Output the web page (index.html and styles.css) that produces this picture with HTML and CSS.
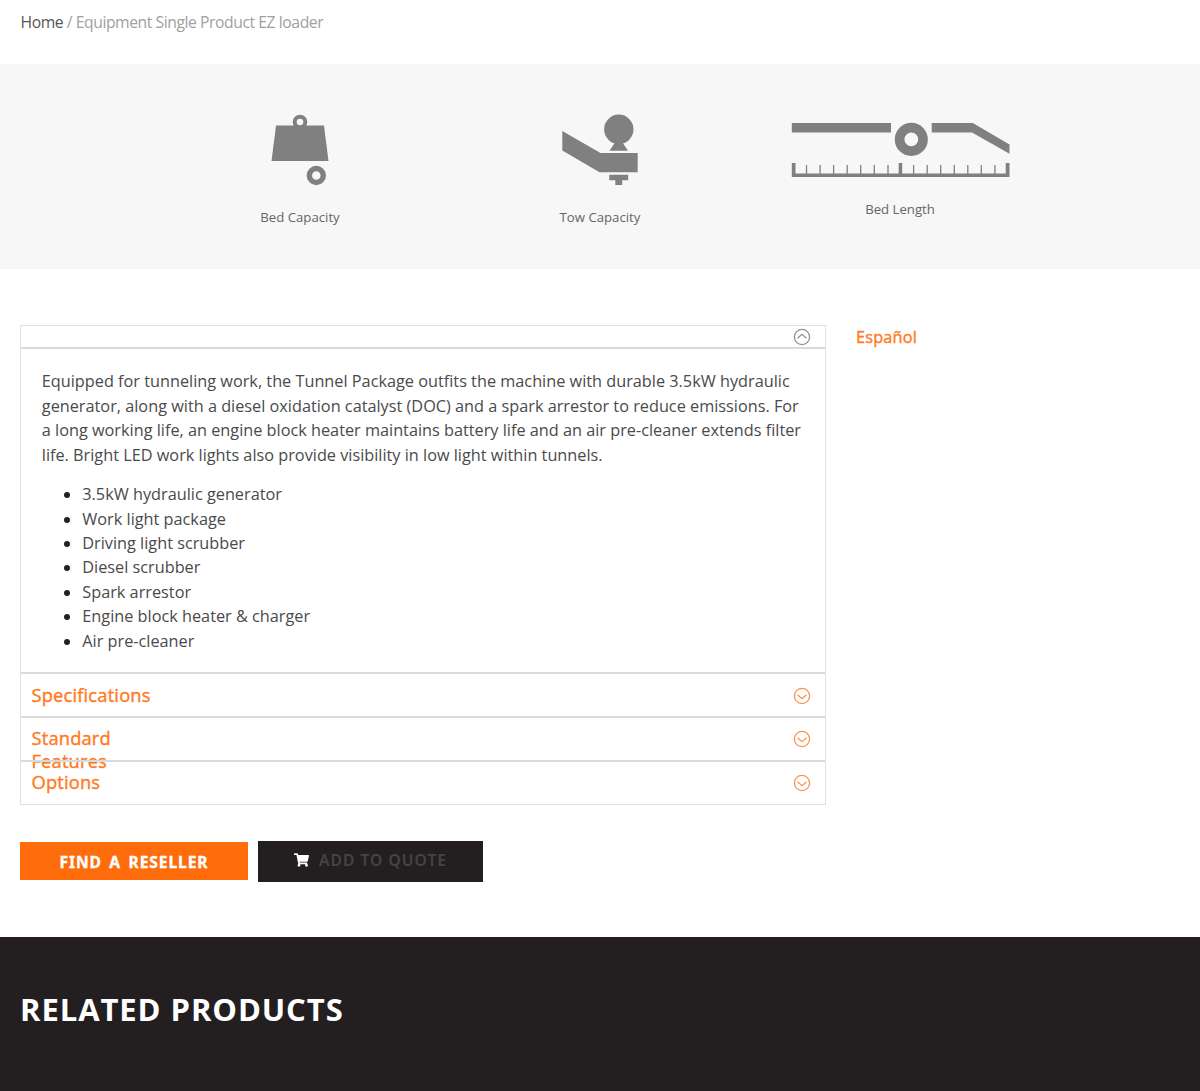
FILE: index.html
```html
<!DOCTYPE html>
<html lang="en">
<head>
<meta charset="utf-8">
<title>Equipment Single Product EZ loader</title>
<link rel="stylesheet" href="styles.css">
</head>
<body>
<nav class="breadcrumb"><a class="crumb-home" href="#">Home</a> / Equipment Single Product EZ loader</nav>

<section class="specs">
  <div class="spec">
    <svg class="icon-square" viewBox="0 0 82 82" fill="#808080">
      <path d="M17 16.500H65L69.500 52H12.500Z"/>
      <circle cx="41" cy="13" r="5.300" fill="#f7f7f7" stroke="#808080" stroke-width="4"/>
      <circle cx="57.300" cy="66.500" r="7" fill="#f7f7f7" stroke="#808080" stroke-width="5.400"/>
    </svg>
    <span class="spec-label">Bed Capacity</span>
  </div>
  <div class="spec">
    <svg class="icon-square" viewBox="0 0 82 82" fill="#808080">
      <circle cx="59.800" cy="20.300" r="14.700"/>
      <path d="M56 33.500H63.500L69 41.700H50.500Z"/>
      <path d="M3.300 22L41.500 43.900H78.700V63.200H40.500L3.300 41.500Z"/>
      <path d="M50.300 65.700H69.200V71.200H63.200V76H56.300V71.200H50.300Z"/>
    </svg>
    <span class="spec-label">Tow Capacity</span>
  </div>
  <div class="spec">
    <svg class="icon-wide" viewBox="0 0 220 74" fill="#808080">
      <path d="M1.800 14H101V23.500H1.800Z"/>
      <path d="M141.700 14H182.800L219.500 35.500V44.700L182 23.500H141.700Z"/>
      <circle cx="121.300" cy="30.400" r="11.700" fill="#f7f7f7" stroke="#808080" stroke-width="9.700"/>
      <path d="M1.800 54H5.500V64.500H108.700V54H112.200V64.500H215.700V54H219.500V68H1.800Z"/>
      <path d="M16.500 56V66M30.100 56V66M43.600 56V66M57.200 56V66M70.700 56V66M84.300 56V66M98 56V66M123.600 56V66M137.200 56V66M150.700 56V66M164.300 56V66M177.800 56V66M191.300 56V66M204.900 56V66" stroke="#808080" stroke-width="1.300"/>
    </svg>
    <span class="spec-label">Bed Length</span>
  </div>
</section>

<main class="product">
  <div class="accordion">
    <div class="panel-head panel-head-open">
      <svg class="toggle" viewBox="0 0 18 18"><circle cx="9" cy="9" r="7.600"/><path d="M4.500 10.300L9 6.300L13.500 10.300"/></svg>
    </div>
    <div class="panel-body">
      <p class="description">Equipped for tunneling work, the Tunnel Package outfits the machine with durable 3.5kW hydraulic generator, along with a diesel oxidation catalyst (DOC) and a spark arrestor to reduce emissions. For a long working life, an engine block heater maintains battery life and an air pre-cleaner extends filter life. Bright LED work lights also provide visibility in low light within tunnels.</p>
      <ul class="features">
        <li>3.5kW hydraulic generator</li>
        <li>Work light package</li>
        <li>Driving light scrubber</li>
        <li>Diesel scrubber</li>
        <li>Spark arrestor</li>
        <li>Engine block heater &amp; charger</li>
        <li>Air pre-cleaner</li>
      </ul>
    </div>
    <div class="panel-head"><h2 class="panel-title">Specifications</h2>
      <svg class="toggle" viewBox="0 0 18 18"><circle cx="9" cy="9" r="7.600"/><path d="M4.500 7.700L9 11.700L13.500 7.700"/></svg></div>
    <div class="panel-head"><h2 class="panel-title">Standard Features</h2>
      <svg class="toggle" viewBox="0 0 18 18"><circle cx="9" cy="9" r="7.600"/><path d="M4.500 7.700L9 11.700L13.500 7.700"/></svg></div>
    <div class="panel-head"><h2 class="panel-title">Options</h2>
      <svg class="toggle" viewBox="0 0 18 18"><circle cx="9" cy="9" r="7.600"/><path d="M4.500 7.700L9 11.700L13.500 7.700"/></svg></div>
  </div>
  <a class="language" href="#">Español</a>
</main>

<div class="actions">
  <a class="button button-find" href="#"><span>FIND A RESELLER</span></a>
  <a class="button button-quote" href="#">
    <svg class="cart" viewBox="0 0 576 512" fill="#fff"><path d="M528.100 301.300l47.300-208C578.800 78.300 567.400 64 552 64H159.200l-9.200-44.800C147.800 8 137.900 0 126.500 0H24C10.700 0 0 10.700 0 24v16c0 13.300 10.700 24 24 24h69.900l70.200 343.400C147.300 417.100 136 435.200 136 456c0 30.900 25.100 56 56 56s56-25.100 56-56c0-15.700-6.400-29.800-16.800-40h209.600C430.400 426.200 424 440.300 424 456c0 30.900 25.100 56 56 56s56-25.100 56-56c0-22.200-12.900-41.300-31.600-50.400l5.500-24.300c3.400-15-8-29.300-23.400-29.300H218.100l-6.500-32h293.100c11.200 0 20.900-7.800 23.400-18.700z"/></svg>
    <span>ADD TO QUOTE</span>
  </a>
</div>

<section class="related"><h2 class="related-title">RELATED PRODUCTS</h2></section>
</body>
</html>
```

FILE: styles.css
```css
* { box-sizing: border-box; }

body {
  margin: 0;
  display: flex;
  flex-direction: column;
  height: 1091px;
  overflow: hidden;
  background: #fff;
  color: #4a4a4a;
  font-family: "Open Sans", "Noto Sans", sans-serif;
  font-size: 16.27px;
  line-height: 24.4px;
}

a { text-decoration: none; }
h2 { margin: 0; }

.breadcrumb {
  height: 64px;
  padding: 10px 20.5px 0;
  color: #a0a0a0;
  font-size: 15.7px;
  letter-spacing: -0.43px;
}
.crumb-home { color: #555; }

.specs {
  display: flex;
  justify-content: center;
  height: 205px;
  padding-top: 45px;
  background: #f7f7f7;
}
.spec {
  display: flex;
  flex-direction: column;
  align-items: center;
  width: 300px;
}
.icon-square { width: 82px; height: 82px; margin-bottom: 14px; }
.icon-wide { width: 220px; height: 74px; margin-bottom: 14px; }
.spec-label { color: #666; font-size: 13.2px; line-height: 24px; }

.product {
  display: flex;
  align-items: flex-start;
  gap: 30px;
  padding: 56px 20px 0;
}

.accordion {
  width: 806px;
  border: 1px solid #dee0e2;
}
.panel-head {
  position: relative;
  display: flex;
  justify-content: space-between;
  height: 43.9px;
  padding: 9.5px 14px 0 10.5px;
  border-top: 2px solid #d8dbde;
}
.panel-head-open {
  justify-content: flex-end;
  height: 21px;
  padding: 2px 14px 0 0;
  border-top: 0;
}
.panel-title {
  width: 90px;
  color: #ff7a22;
  font-size: 18.3px;
  font-weight: 400;
  line-height: 22.4px;
  letter-spacing: 0.18px;
  -webkit-text-stroke: 0.4px #ff7a22;
}
.toggle {
  width: 18px;
  height: 18px;
  fill: none;
  stroke: #ff9450;
  stroke-width: 1.3;
}
.panel-head .toggle { margin-top: 3px; }
.panel-head-open .toggle { margin-top: 0; stroke: #929292; }

.panel-body {
  height: 325px;
  padding: 20.3px 20.8px 0;
  border-top: 2px solid #d8dbde;
}
.description { margin: 0 0 15.3px; }
.features { margin: 0; padding-left: 40.5px; }
.features li::marker { color: #222; }

.language {
  color: #ff7a22;
  letter-spacing: 0.2px;
  -webkit-text-stroke: 0.4px #ff7a22;
}

.actions {
  display: flex;
  gap: 10px;
  padding: 36px 20px 0;
}
.button {
  display: flex;
  justify-content: center;
  align-items: center;
}
.button-find {
  width: 228px;
  height: 38px;
  margin-top: 1px;
  padding-top: 2px;
  background: #ff6c0c;
  color: #fff;
  font: 700 15.6px/24px "Noto Sans", sans-serif;
  letter-spacing: 0.9px;
  word-spacing: 2.5px;
  -webkit-text-stroke: 0.35px #fff;
}
.button-quote {
  gap: 10px;
  width: 225px;
  height: 41px;
  padding-bottom: 3px;
  background: #231f20;
  color: #444;
  font: 600 15.6px/24px "Noto Sans", sans-serif;
  letter-spacing: 1.05px;
}
.cart { width: 15px; height: 14px; }

.related {
  flex: 1;
  margin-top: 55.5px;
  padding: 50.5px 20px 0;
  background: #231f20;
}
.related-title {
  color: #fff;
  font-size: 31px;
  font-weight: 700;
  line-height: 42px;
  letter-spacing: 0.93px;
}
```
